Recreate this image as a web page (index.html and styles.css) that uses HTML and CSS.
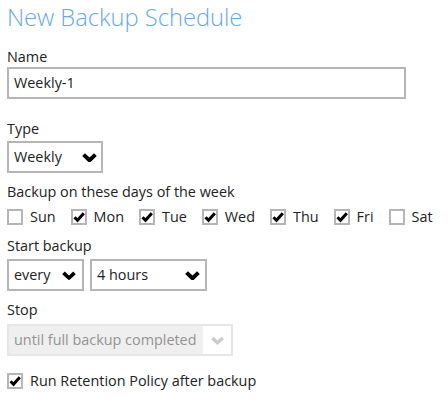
FILE: index.html
```html
<!DOCTYPE html>
<html lang="en">
<head>
    <meta charset="UTF-8">
    <meta name="viewport" content="width=device-width, initial-scale=1.0">
    <title>New Backup Schedule</title>
    <link rel="stylesheet" href="styles.css">
</head>
<body>
    <div class="form">
        <h1>New Backup Schedule</h1>

        <div class="field">
            <div class="label">Name</div>
            <div class="input name-input">Weekly-1</div>
        </div>

        <div class="field type-field">
            <div class="label">Type</div>
            <div class="select type-select">
                <span>Weekly</span>
                <svg class="chev" viewBox="0 0 15 9"><path d="M1.6 1.6 L7.5 7.2 L13.4 1.6"/></svg>
            </div>
        </div>

        <div class="field days-field">
            <div class="label">Backup on these days of the week</div>
            <div class="days">
                <label class="check"><span class="box"></span>Sun</label>
                <label class="check"><span class="box checked"><svg viewBox="0 0 12 12"><path d="M1.5 6.2 L4.5 9.2 L10.8 2.2"/></svg></span>Mon</label>
                <label class="check"><span class="box checked"><svg viewBox="0 0 12 12"><path d="M1.5 6.2 L4.5 9.2 L10.8 2.2"/></svg></span>Tue</label>
                <label class="check"><span class="box checked"><svg viewBox="0 0 12 12"><path d="M1.5 6.2 L4.5 9.2 L10.8 2.2"/></svg></span>Wed</label>
                <label class="check"><span class="box checked"><svg viewBox="0 0 12 12"><path d="M1.5 6.2 L4.5 9.2 L10.8 2.2"/></svg></span>Thu</label>
                <label class="check"><span class="box checked"><svg viewBox="0 0 12 12"><path d="M1.5 6.2 L4.5 9.2 L10.8 2.2"/></svg></span>Fri</label>
                <label class="check"><span class="box"></span>Sat</label>
            </div>
        </div>

        <div class="field start-field">
            <div class="label">Start backup</div>
            <div class="row">
                <div class="select every-select">
                    <span>every</span>
                    <svg class="chev" viewBox="0 0 15 9"><path d="M1.6 1.6 L7.5 7.2 L13.4 1.6"/></svg>
                </div>
                <div class="select hours-select">
                    <span>4 hours</span>
                    <svg class="chev" viewBox="0 0 15 9"><path d="M1.6 1.6 L7.5 7.2 L13.4 1.6"/></svg>
                </div>
            </div>
        </div>

        <div class="field stop-field">
            <div class="label">Stop</div>
            <div class="select disabled stop-select">
                <span>until full backup completed</span>
                <span class="arrow-cell">
                    <svg class="chev" viewBox="0 0 15 9"><path d="M1.6 1.6 L7.5 7.2 L13.4 1.6"/></svg>
                </span>
            </div>
        </div>

        <label class="check retention">
            <span class="box checked"><svg viewBox="0 0 12 12"><path d="M1.5 6.2 L4.5 9.2 L10.8 2.2"/></svg></span>Run Retention Policy after backup
        </label>
    </div>
</body>
</html>
```

FILE: styles.css
```css
:root {
    --text: #222222;
    --border: #b5b5b5;
    --title: #64a9ef;
}

* {
    margin: 0;
    padding: 0;
    box-sizing: border-box;
}

body {
    font-family: 'Open Sans', sans-serif;
    font-size: 14.4px;
    color: var(--text);
    background: #ffffff;
}

.form {
    padding: 1px 0 0 7px;
}

h1 {
    font-size: 23.7px;
    font-weight: 300;
    line-height: 32px;
    color: var(--title);
    margin-bottom: 14px;
}

.label {
    line-height: 20px;
}

.input,
.select {
    border: 2px solid var(--border);
    height: 32px;
    line-height: 28px;
    padding: 0 5px;
    background: #ffffff;
}

.name-input {
    width: 399px;
}

.type-field {
    margin-top: 20px;
}

.select {
    display: flex;
    align-items: center;
    justify-content: space-between;
}

.chev {
    width: 15px;
    height: 9px;
    fill: none;
    stroke: #000000;
    stroke-width: 4;
    stroke-linejoin: round;
}

.type-select {
    width: 96px;
    margin-top: 2px;
    padding-right: 4px;
}

.days-field {
    margin-top: 9px;
}

.days {
    display: flex;
    gap: 15px;
    margin-top: 6px;
}

.check {
    display: flex;
    align-items: center;
    gap: 7px;
    line-height: 18px;
}

.box {
    width: 16px;
    height: 16px;
    border: 2px solid var(--border);
    display: flex;
    align-items: center;
    justify-content: center;
}

.box svg {
    width: 12px;
    height: 12px;
    fill: none;
    stroke: #000000;
    stroke-width: 3;
}

.start-field {
    margin-top: 10px;
}

.row {
    display: flex;
    gap: 6px;
    margin-top: 3px;
}

.every-select {
    width: 77px;
    padding-right: 6px;
}

.every-select .chev {
    width: 14px;
}

.hours-select {
    width: 117px;
    padding-right: 5px;
}

.stop-field {
    margin-top: 9px;
}

.stop-select {
    width: 226px;
    margin-top: 4px;
    background: #efefef;
    border-color: #e6e6e6;
    color: #939393;
    padding-right: 0;
}

.arrow-cell {
    background: #ffffff;
    width: 28px;
    height: 100%;
    display: flex;
    align-items: center;
    justify-content: center;
}

.stop-select .chev {
    width: 13px;
    stroke: #cccccc;
}

.retention {
    margin-top: 16px;
}
```
